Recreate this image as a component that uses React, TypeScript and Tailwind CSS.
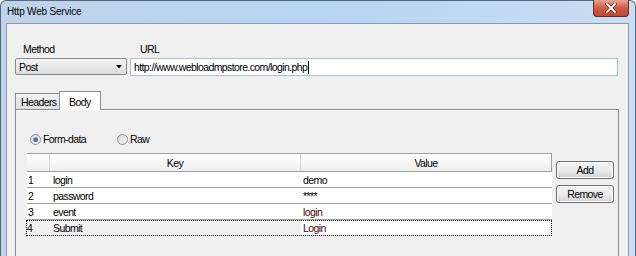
import React from "react";

const rows = [
  { n: "1", key: "login", value: "demo", dark: false },
  { n: "2", key: "password", value: "****", dark: false },
  { n: "3", key: "event", value: "login", dark: true },
];

function Radio({ checked }: { checked?: boolean }) {
  return (
    <div className="w-[11px] h-[11px] rounded-full border border-[#8e8f8f] bg-gradient-to-br from-[#d6d6d6] to-[#fafafa] flex items-center justify-center">
      {checked && (
        <div className="w-[5px] h-[5px] rounded-full bg-gradient-to-br from-[#7ab0e6] to-[#1b4f91]" />
      )}
    </div>
  );
}

function Button({ label }: { label: string }) {
  return (
    <div className="w-[58px] h-[18px] rounded-[3px] border border-[#707070] bg-gradient-to-b from-[#f2f2f2] via-[#ebebeb] to-[#d4d4d4] flex items-center justify-center shadow-[inset_0_0_0_1px_#fcfcfc]">
      {label}
    </div>
  );
}

export default function App() {
  return (
    <div
      className="w-[636px] h-[256px] overflow-hidden text-[10.5px] tracking-[-0.6px] text-black leading-[12px]"
      style={{ fontFamily: '"Liberation Sans", Arial, sans-serif' }}
    >
      <div className="flex flex-col h-full rounded-t-[6px] border border-b-0 border-[#56687c] bg-gradient-to-r from-[#bfd4ea] via-[#b7d4f3] to-[#c9def4]">
        {/* Title bar */}
        <div className="flex h-[22px] shrink-0">
          <div className="pl-[6px] pt-[5px] text-[10px] tracking-[-0.2px]">Http Web Service</div>
          <div className="ml-auto mr-[6px] -mt-px w-[36px] h-[17px] rounded-b-[4px] border border-t-0 border-[#6e2a22] bg-gradient-to-b from-[#e8a493] via-[#cf5a44] to-[#c04a32] flex items-center justify-center">
            <svg width="12" height="10" viewBox="0 0 12 10">
              <path d="M2 1 L10 9 M10 1 L2 9" stroke="#5a2a24" strokeWidth="3.2" strokeLinecap="square" />
              <path d="M2 1 L10 9 M10 1 L2 9" stroke="#ffffff" strokeWidth="1.8" strokeLinecap="square" />
            </svg>
          </div>
        </div>

        {/* Client area */}
        <div className="flex-1 pl-[5px] pr-[6px] flex">
          <div className="flex-1 border border-b-0 border-[#8a9aac] bg-[#f0f0f0] flex flex-col">
            {/* Method / URL */}
            <div className="flex pt-[19px]">
              <div className="ml-[8px] w-[112px] flex flex-col">
                <div className="pl-[8px]">Method</div>
                <div className="mt-[3px] h-[17px] rounded-[2px] border border-[#8a8a8a] bg-gradient-to-b from-[#f4f4f4] to-[#dddddd] flex items-center pl-[3px] pr-[4px]">
                  <span>Post</span>
                  <svg className="ml-auto" width="6" height="4" viewBox="0 0 6 4">
                    <path d="M0 0 H6 L3 3.5 Z" fill="#000" />
                  </svg>
                </div>
              </div>
              <div className="ml-[3px] mr-[10px] flex-1 flex flex-col">
                <div className="pl-[10px]">URL</div>
                <div className="mt-[3px] h-[18px] border border-[#abc1d8] bg-white flex items-center pl-[3px]">
                  <span>http://www.webloadmpstore.com/login.php</span>
                  <span className="w-px h-[13px] bg-black ml-px" />
                </div>
              </div>
            </div>

            {/* Tabs */}
            <div className="flex items-end mt-[15px] ml-[8px] h-[18px]">
              <div className="h-[16px] w-[45px] border border-b-0 border-[#898c95] bg-gradient-to-b from-[#f2f2f2] to-[#e0e0e0] pl-[5px] flex items-center">
                Headers
              </div>
              <div className="relative -mb-px -ml-px h-[19px] w-[42px] border border-b-0 border-[#898c95] bg-white pl-[9px] pt-[1px] flex items-center">
                Body
              </div>
            </div>

            <div className="flex-1 ml-[8px] mr-[9px] border border-b-0 border-[#898c95] bg-[#f0f0f0] shadow-[inset_0_1px_0_#ffffff] flex flex-col">
              {/* Radios */}
              <div className="flex items-center mt-[23px] ml-[14px]">
                <Radio checked />
                <span className="ml-[2px]">Form-data</span>
                <div className="ml-[31px]">
                  <Radio />
                </div>
                <span className="ml-[2px]">Raw</span>
              </div>

              {/* Grid + buttons */}
              <div className="flex mt-[8px] ml-[11px]">
                <div className="w-[525px] flex flex-col">
                  <div className="flex h-[19px] border-t border-b border-[#a0a0a0] bg-gradient-to-b from-[#ffffff] to-[#eeeeee]">
                    <div className="w-[23px] border-r border-[#d5d5d5]" />
                    <div className="w-[251px] border-r border-[#d5d5d5] flex items-center justify-center">Key</div>
                    <div className="flex-1 border-r border-[#a0a0a0] flex items-center justify-center">Value</div>
                  </div>
                  {rows.map((r) => (
                    <div key={r.n} className="flex h-[16px] border-b border-[#a0a0a0] bg-white items-center">
                      <div className="w-[23px] pl-[1px]">{r.n}</div>
                      <div className="w-[251px] pl-[3px]">{r.key}</div>
                      <div className={`flex-1 pl-[2px] ${r.dark ? "text-[#4a0a0a]" : "text-black"}`}>{r.value}</div>
                    </div>
                  ))}
                  <div className="flex h-[16px] border border-dotted border-black items-stretch -ml-px">
                    <div className="w-[23px] bg-[#f0f0f0] flex items-center">4</div>
                    <div className="w-[251px] bg-[#f0f0f0] pl-[3px] flex items-center">Submit</div>
                    <div className="flex-1 bg-white pl-[2px] flex items-center text-[#4a0a0a]">Login</div>
                  </div>
                </div>
                <div className="ml-[4px] mt-[8px] flex flex-col gap-[6px]">
                  <Button label="Add" />
                  <Button label="Remove" />
                </div>
              </div>
            </div>
          </div>
        </div>
      </div>
    </div>
  );
}
